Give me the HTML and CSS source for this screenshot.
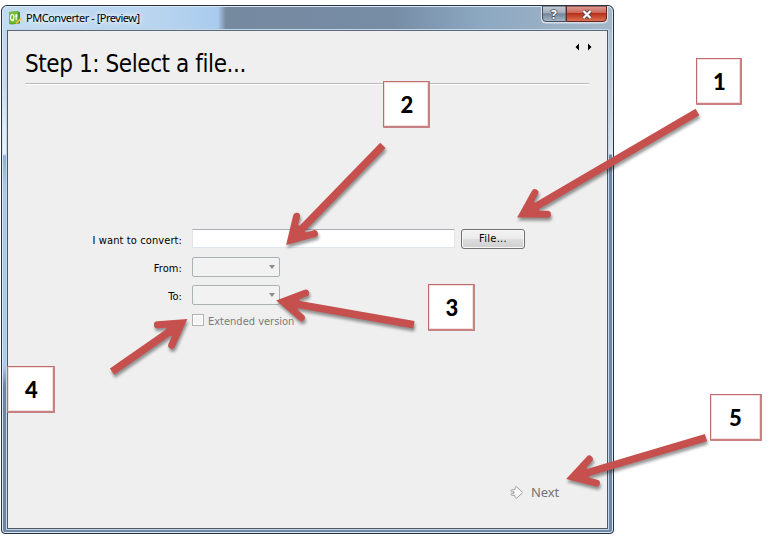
FILE: index.html
```html
<!DOCTYPE html>
<html lang="en">
<head>
<meta charset="utf-8">
<title>PMConverter</title>
<link rel="stylesheet" href="styles.css">
</head>
<body>
<main class="window">
  <header class="titlebar">
    <svg class="app-icon" width="14" height="14" viewBox="0 0 14 14">
      <path d="M1 1l9-.8 2 1v11.3l-9 1-2-1z" fill="#4c9b24"/>
      <path d="M1 1l9-.8V12l-9 .5z" fill="#70bd32"/>
      <ellipse cx="4.2" cy="6.3" rx="1.7" ry="3" fill="none" stroke="#fff" stroke-width="1.2"/>
      <path d="M4.5 8.5l1.3 1.6M8.2 3v6M6.9 5h2.8" stroke="#fff" stroke-width="1.1"/>
      <path d="M7.4 13.5l1-2.8 4-4 1.3 1.3-4 4z" fill="#f5bd3b"/>
    </svg>
    <h1 class="caption">PMConverter - [Preview]</h1>
    <div class="controls">
      <svg width="67" height="18" viewBox="0 0 67 18">
        <defs>
          <linearGradient id="grey" x2="0" y2="1"><stop stop-color="#c5ccd5"/><stop offset=".45" stop-color="#a2adba"/><stop offset=".5" stop-color="#76869a"/><stop offset="1" stop-color="#a7b8c9"/></linearGradient>
          <linearGradient id="red" x2="0" y2="1"><stop stop-color="#dfa096"/><stop offset=".42" stop-color="#cc6b5d"/><stop offset=".48" stop-color="#b82f1b"/><stop offset="1" stop-color="#dc7556"/></linearGradient>
        </defs>
        <path d="M.5 0v13q0 4 4 4h58q4 0 4-4V0" fill="#d3dce6" stroke="#d9e2ec"/>
        <path d="M1.5 0v12q0 3.5 3.5 3.5h20V0z" fill="url(#grey)" stroke="#46505d"/>
        <path d="M25.5 0v15.5H62q3.500 0 3.500-3.500V0z" fill="url(#red)" stroke="#642820"/>
        <path d="M42.500 5l7 7M49.500 5l-7 7" stroke="#5c404a" stroke-width="4"/>
        <path d="M42.500 5l7 7M49.500 5l-7 7" stroke="#fff" stroke-width="2.300"/>
        <text class="help" x="10" y="12.500">?</text>
      </svg>
    </div>
  </header>
  <section class="content">
    <div class="pager">
      <svg width="18" height="8" viewBox="0 0 18 8"><path d="M5 .5v7L1.500 4zM14 .5v7L17.500 4z"/></svg>
    </div>
    <h2 class="heading"><span>Step 1: Select a file...</span></h2>
    <form class="form">
      <label class="label convert">I want to convert:</label>
      <div class="file-row"><div class="field"></div><button class="file" type="button">File...</button></div>
      <label class="label">From:</label>
      <div class="combo"><i class="caret"></i></div>
      <label class="label">To:</label>
      <div class="combo"><i class="caret"></i></div>
      <div class="check"><i class="box"></i><span>Extended version</span></div>
    </form>
    <footer class="next">
      <svg width="13" height="13" viewBox="0 0 13 13"><path d="M5 3.700V1.500q.6-1.200 1.800-.5l5.200 4.700q.5.800 0 1.600L6.800 12Q5.600 12.700 5 11.500V9.300H1.500q-1-1 0-2H4V5.700H1.500q-1-1 0-2z" fill="#f7f7f7" stroke="#a0a0a0"/></svg>
      <span>Next</span>
    </footer>
  </section>
</main>

<svg class="arrows" width="777" height="537" viewBox="0 0 777 537">
  <g class="arrow" transform="translate(517 217.500) rotate(-30.300)"><path d="M8 0H209"/><path class="head" d="M28 -12.500L7 0L28 12.500"/><path class="web" d="M4 0L22 -8.500L24 0L22 8.500z"/></g>
  <g class="arrow" transform="translate(286 245) rotate(-45.800)"><path d="M8 0H139"/><path class="head" d="M28 -12.500L7 0L28 12.500"/><path class="web" d="M4 0L22 -8.500L24 0L22 8.500z"/></g>
  <g class="arrow" transform="translate(276 300.500) rotate(10)"><path d="M8 0H140"/><path class="head" d="M28 -12.500L7 0L28 12.500"/><path class="web" d="M4 0L22 -8.500L24 0L22 8.500z"/></g>
  <g class="arrow" transform="translate(187.500 319) rotate(145.100)"><path d="M8 0H92"/><path class="head" d="M28 -12.500L7 0L28 12.500"/><path class="web" d="M4 0L22 -8.500L24 0L22 8.500z"/></g>
  <g class="arrow" transform="translate(566 479) rotate(-16.500)"><path d="M8 0H146"/><path class="head" d="M28 -12.500L7 0L28 12.500"/><path class="web" d="M4 0L22 -8.500L24 0L22 8.500z"/></g>
</svg>
<div class="callout one">1</div>
<div class="callout two">2</div>
<div class="callout three">3</div>
<div class="callout four">4</div>
<div class="callout five">5</div>
</body>
</html>
```

FILE: styles.css
```css
* { box-sizing: border-box; }
body {
  margin: 0;
  width: 777px;
  height: 537px;
  padding: 5px 0 0 1px;
  overflow: hidden;
  position: relative;
  background: #fff;
  color: #000;
  font: 11px/14px "DejaVu Sans Condensed", "DejaVu Sans", sans-serif;
}
.window {
  width: 613px;
  height: 529px;
  padding: 0 5px 5px;
  border: 1px solid #29323d;
  border-radius: 6px 6px 4px 4px;
  box-shadow: inset 0 0 0 1px #d8e8f7;
  background:
    linear-gradient(#a5b9cb 0, #c5d2df 110px, #dce4ed 148px, #7089a4 149px) right 0 top 0 / 6px 100% no-repeat,
    linear-gradient(#b8d4f0 0, #c6dcf2 80px, #dfedfb 125px, #e5f0fc 148px, #8faee0 150px, #a9c7e9 180px, #a9cbec 360px, #6c879f 380px, #6c879f 100%) left 0 top 0 / 6px 100% no-repeat,
    #7089a4;
}
.titlebar {
  height: 24px;
  margin: 0 -4px;
  padding-left: 5px;
  display: flex;
  align-items: flex-start;
  border-top: 1px solid #d7e7f6;
  border-radius: 5px 5px 0 0;
  background: linear-gradient(90deg, #c4dcf2 0, #b7d4ef 160px, #a9cbed 215px, #75899f 223px, #778da6 390px, #8da8c1 480px, #a5b8ca 100%);
}
.app-icon { margin-top: 4px; }
.caption {
  margin: 3px 0 0 4px;
  font: 11px/16px "Noto Sans", sans-serif;
  letter-spacing: -.48px;
  text-shadow: 0 0 5px #fff, 0 0 7px #fff;
}
.controls { margin: -1px 4px 0 auto; height: 18px; }
.controls svg { display: block; }
.help { font: bold 12px "Noto Sans", sans-serif; fill: #fff; stroke: #465361; stroke-width: 1.500px; paint-order: stroke; }
.content {
  height: 499px;
  border: 1px solid #4b5967;
  border-top-color: #596b7d;
  background: #efefef;
  box-shadow: 0 0 0 1px #c4d5e4;
  display: flex;
  flex-direction: column;
  padding: 12px 18px 0 17px;
}
.pager { height: 8px; display: flex; justify-content: flex-end; }
.pager svg { margin-right: -3px; }
.heading {
  height: 33px;
  margin: 0;
  border-bottom: 1px solid #bcbcbc;
  box-shadow: 0 1px #fff;
  font: 24px/26px "DejaVu Sans Condensed", "DejaVu Sans", sans-serif;
  letter-spacing: -.42px;
  white-space: nowrap;
}
.form {
  margin-top: 145px;
  display: grid;
  grid-template-columns: 157px 1fr;
  grid-template-rows: 20px 20px 20px 14px;
  column-gap: 10px;
  row-gap: 8px;
}
.label { text-align: right; line-height: 23px; letter-spacing: .1px; white-space: nowrap; }
.file-row { display: flex; gap: 6px; }
.field { width: 263px; height: 19px; border: 1px solid #e0e4eb; border-top-color: #aaadb3; background: #fff; border-radius: 1px; }
.file {
  width: 64px;
  height: 20px;
  padding: 0;
  border: 1px solid #707070;
  border-radius: 3px;
  background: linear-gradient(#f3f3f3, #ebebeb 48%, #dddddd 52%, #cfcfcf);
  box-shadow: inset 0 0 0 1px #f7f7f7;
  color: #000;
  font: inherit;
  letter-spacing: .3px;
}
.combo { width: 88px; height: 20px; border: 1px solid #adb2b5; border-radius: 2px; background: #f2f2f2; display: flex; justify-content: flex-end; padding: 7px 4px 0; }
.caret { width: 0; height: 0; border: 3.500px solid transparent; border-top: 4px solid #8b8b8b; border-bottom: 0; }
.check { grid-column: 2; display: flex; gap: 4px; color: #7b7b7b; white-space: nowrap; }
.check span { line-height: 17px; }
.box { width: 12px; height: 12px; margin-top: 1px; border: 1px solid #b1b1b1; background: #f4f4f4; box-shadow: inset 0 0 0 1px #fff; }
.next { margin: auto 30px 26px auto; display: flex; align-items: center; gap: 8px; color: #747474; font: 13px/20px "Noto Sans", sans-serif; letter-spacing: -.1px; }
.arrows { position: absolute; inset: 0; filter: drop-shadow(1px 3px 1.500px #0006); }
.arrow { fill: none; stroke: #c5504d; stroke-width: 7.500px; }
.head { stroke-width: 7px; stroke-linecap: round; stroke-linejoin: miter; }
.web { fill: #c5504d; stroke: none; }
.callout {
  position: absolute;
  width: 47px;
  height: 47px;
  border: 1px solid #bd6b6b;
  border-right: 2px solid #c68282;
  border-bottom: 2px solid #c68282;
  border-radius: 1px;
  box-shadow: inset 0 0 0 1px #f3dddd;
  background: #fff;
  font: 900 22px/46px Lato, "Noto Sans", sans-serif;
  text-align: center;
  padding-left: 2px;
}
.one { left: 696px; top: 58px; width: 46px; }
.two { left: 383px; top: 81px; }
.three { left: 428px; top: 284px; }
.four { left: 7px; top: 366px; width: 48px; }
.five { left: 710px; top: 394px; width: 52px; padding: 0; }
```
